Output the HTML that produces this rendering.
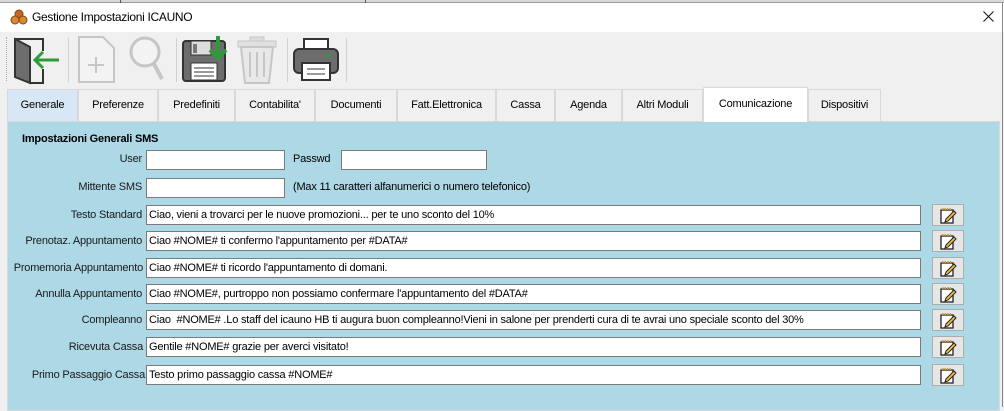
<!DOCTYPE html>
<html><head><meta charset="utf-8"><style>
*{box-sizing:border-box;margin:0;padding:0}
body{width:1004px;height:407px;overflow:hidden;background:#f0f0f0;font-family:"Liberation Sans",Arial,sans-serif;font-size:11px;letter-spacing:-0.2px;color:#000;position:relative}
.abs{position:absolute}
.top{left:0;top:0;width:1004px;height:3px;background:#d8d8d8;border-bottom:1px solid #999}
.title{left:0;top:3px;width:1004px;height:29px;background:#fff}
.tab{position:absolute;top:89px;height:32px;border:1px solid #d9d9d9;border-bottom:none;background:#f0f0f0;text-align:center;line-height:30px;font-size:11px}
.panel{left:7px;top:121px;width:993px;height:290px;background:#add8e6;border:1px solid #d9d9d9}
.lbl{position:absolute;text-align:right;width:200px;color:#1a1a1a}
.in{position:absolute;background:#fff;border:1px solid #7a7a7a;height:20px;line-height:18px;padding-left:2px;white-space:nowrap;overflow:hidden}
.btn{position:absolute;left:932px;width:32px;height:22px;background:#e6e6e6;border:1px solid #adadad}
.sep{position:absolute;top:38px;width:1px;height:44px;background:#d0d0d0}
</style></head><body>
<div class="abs top"></div>
<div class="abs" style="left:120px;top:0;width:1px;height:3px;background:#555"></div>
<div class="abs" style="left:365px;top:0;width:1px;height:3px;background:#555"></div>
<div class="abs title"></div>
<svg class="abs" style="left:10px;top:9px" width="18" height="16" viewBox="0 0 18 16"><circle cx="9" cy="5" r="4" fill="#c8651f" stroke="#7a4a1a"/><circle cx="5" cy="11" r="4" fill="#d9892f" stroke="#7a4a1a"/><circle cx="13" cy="11" r="4" fill="#d9892f" stroke="#7a4a1a"/></svg>
<div class="abs" style="left:32px;top:10px;font-size:12px;letter-spacing:-0.3px">Gestione Impostazioni ICAUNO</div>
<svg class="abs" style="left:983px;top:11px" width="11" height="11"><path d="M0.5 0.5 L10.5 10.5 M10.5 0.5 L0.5 10.5" stroke="#111" stroke-width="1"/></svg>

<div class="abs" style="left:6px;top:37px;width:1px;height:44px;border-left:1px dotted #aaa"></div>
<svg class="abs" style="left:13px;top:35px" width="50" height="50" viewBox="0 0 50 50"><path d="M2 4 L17 12 L17 48 L2 42Z" fill="#6d6d6d" stroke="#333" stroke-width="2"/><path d="M2 4 H30 V16 M30 34 V48 H17" fill="none" stroke="#333" stroke-width="2"/><path d="M46 25 H22 M30 17 L22 25 L30 33" fill="none" stroke="#2e9a3a" stroke-width="3"/></svg>
<div class="sep" style="left:68px"></div>
<svg class="abs" style="left:77px;top:35px" width="40" height="50" viewBox="0 0 40 50"><path d="M2 2 H26 L37 13 V47 H2Z" fill="#f3f3f3" stroke="#c6c6c6" stroke-width="2"/><path d="M19 22 V38 M11 30 H27" stroke="#c6c6c6" stroke-width="2"/></svg>
<svg class="abs" style="left:128px;top:35px" width="40" height="50" viewBox="0 0 40 50"><circle cx="17" cy="17" r="14" fill="#f3f3f3" stroke="#c6c6c6" stroke-width="3"/><path d="M26 29 L34 44" stroke="#c6c6c6" stroke-width="4"/></svg>
<div class="sep" style="left:176px"></div>
<svg class="abs" style="left:181px;top:35px" width="48" height="50" viewBox="0 0 48 50"><rect x="2" y="6" width="42" height="40" rx="3" fill="#6d6d6d" stroke="#333" stroke-width="2"/><rect x="10" y="6" width="20" height="14" fill="#ddd" stroke="#333"/><rect x="12" y="9" width="4" height="9" fill="#777"/><rect x="10" y="28" width="26" height="17" fill="#fff" stroke="#333"/><path d="M13 33 H33 M13 37 H33 M13 41 H33" stroke="#333"/><path d="M37 1 V22 M29 15 L37 23 L45 15" fill="none" stroke="#2e9a3a" stroke-width="4"/></svg>
<svg class="abs" style="left:236px;top:35px" width="44" height="50" viewBox="0 0 44 50"><rect x="14" y="2" width="14" height="4" fill="#ddd" stroke="#c6c6c6"/><rect x="2" y="6" width="38" height="6" fill="#e0e0e0" stroke="#c6c6c6"/><path d="M5 12 L9 48 H33 L37 12Z" fill="#e8e8e8" stroke="#c6c6c6" stroke-width="2"/><path d="M14 17 V42 M21 17 V42 M28 17 V42" stroke="#c6c6c6" stroke-width="2"/></svg>
<div class="sep" style="left:287px"></div>
<svg class="abs" style="left:292px;top:37px" width="50" height="46" viewBox="0 0 50 46"><rect x="12" y="2" width="24" height="12" fill="#fff" stroke="#333" stroke-width="2"/><rect x="2" y="12" width="44" height="24" rx="5" fill="#6d6d6d" stroke="#333" stroke-width="2"/><circle cx="37" cy="19" r="2" fill="#2e9a3a"/><rect x="10" y="26" width="28" height="17" fill="#fff" stroke="#333" stroke-width="2"/><path d="M15 32 H33 M15 37 H33" stroke="#333"/></svg>
<div class="sep" style="left:346px"></div>

<div class="tab" style="left:7px;width:71px;background:#d7e7f5">Generale</div>
<div class="tab" style="left:78px;width:80px">Preferenze</div>
<div class="tab" style="left:158px;width:77px">Predefiniti</div>
<div class="tab" style="left:235px;width:80px">Contabilita'</div>
<div class="tab" style="left:315px;width:82px">Documenti</div>
<div class="tab" style="left:397px;width:99px">Fatt.Elettronica</div>
<div class="tab" style="left:496px;width:59px">Cassa</div>
<div class="tab" style="left:555px;width:67px">Agenda</div>
<div class="tab" style="left:622px;width:81px">Altri Moduli</div>
<div class="tab" style="left:808px;width:73px">Dispositivi</div>
<div class="abs panel"></div>
<div class="tab" style="left:703px;top:87px;width:105px;height:35px;background:#fff;line-height:32px;z-index:2">Comunicazione</div>

<div class="abs" style="left:22px;top:133px;font-weight:bold">Impostazioni Generali SMS</div>
<div class="lbl" style="left:-58px;top:153px">User</div>
<div class="in" style="left:146px;top:150px;width:139px"></div>
<div class="abs" style="left:293px;top:153px">Passwd</div>
<div class="in" style="left:341px;top:150px;width:146px"></div>
<div class="lbl" style="left:-58px;top:181px">Mittente SMS</div>
<div class="in" style="left:146px;top:178px;width:139px"></div>
<div class="abs" style="left:293px;top:181px">(Max 11 caratteri alfanumerici o numero telefonico)</div>

<div class="lbl" style="left:-58px;top:209px">Testo Standard</div>
<div class="in" style="left:146px;top:205px;width:775px">Ciao, vieni a trovarci per le nuove promozioni... per te uno sconto del 10%</div>
<div class="lbl" style="left:-58px;top:235px">Prenotaz. Appuntamento</div>
<div class="in" style="left:146px;top:231px;width:775px">Ciao #NOME# ti confermo l'appuntamento per #DATA#</div>
<div class="lbl" style="left:-57px;top:262px">Promemoria Appuntamento</div>
<div class="in" style="left:146px;top:258px;width:775px">Ciao #NOME# ti ricordo l'appuntamento di domani.</div>
<div class="lbl" style="left:-58px;top:288px">Annulla Appuntamento</div>
<div class="in" style="left:146px;top:284px;width:775px">Ciao #NOME#, purtroppo non possiamo confermare l'appuntamento del #DATA#</div>
<div class="lbl" style="left:-58px;top:314px">Compleanno</div>
<div class="in" style="left:146px;top:310px;width:775px">Ciao &nbsp;#NOME# .Lo staff del icauno HB ti augura buon compleanno!Vieni in salone per prenderti cura di te avrai uno speciale sconto del 30%</div>
<div class="lbl" style="left:-57px;top:341px">Ricevuta Cassa</div>
<div class="in" style="left:146px;top:337px;width:775px">Gentile #NOME# grazie per averci visitato!</div>
<div class="lbl" style="left:-55px;top:369px">Primo Passaggio Cassa</div>
<div class="in" style="left:146px;top:365px;width:775px">Testo primo passaggio cassa #NOME#</div>

<div class="btn" style="top:204px"></div><div class="btn" style="top:230px"></div><div class="btn" style="top:257px"></div><div class="btn" style="top:283px"></div><div class="btn" style="top:309px"></div><div class="btn" style="top:336px"></div><div class="btn" style="top:364px"></div>
<svg width="0" height="0" style="position:absolute"><defs><g id="np"><rect x="1" y="3" width="12" height="13" fill="#fff" stroke="#222" stroke-width="1.3"/><path d="M2 2 H12" stroke="#c8a040" stroke-width="2" stroke-dasharray="1.5 1"/><path d="M6 12 L14 4 L16 6 L8 14 L5 15Z" fill="#f0c040" stroke="#222"/></g></defs></svg>
<svg class="abs" style="left:940px;top:207px" width="18" height="17"><use href="#np"/></svg>
<svg class="abs" style="left:940px;top:233px" width="18" height="17"><use href="#np"/></svg>
<svg class="abs" style="left:940px;top:260px" width="18" height="17"><use href="#np"/></svg>
<svg class="abs" style="left:940px;top:286px" width="18" height="17"><use href="#np"/></svg>
<svg class="abs" style="left:940px;top:312px" width="18" height="17"><use href="#np"/></svg>
<svg class="abs" style="left:940px;top:339px" width="18" height="17"><use href="#np"/></svg>
<svg class="abs" style="left:940px;top:367px" width="18" height="17"><use href="#np"/></svg>
<div class="abs" style="left:1002px;top:3px;width:1px;height:404px;background:#888"></div>
</body></html>
